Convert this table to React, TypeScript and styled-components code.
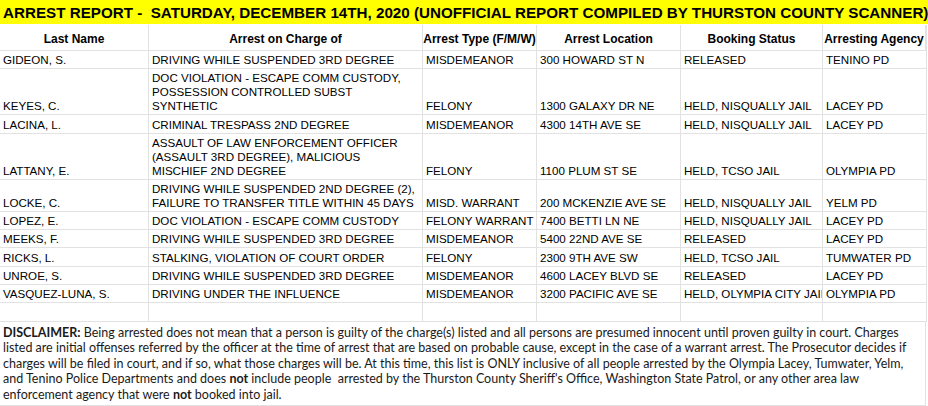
import React from 'react';
import styled, { createGlobalStyle } from 'styled-components';

const GlobalStyle = createGlobalStyle`
  html, body {
    margin: 0;
    padding: 0;
    background: #ffffff;
  }
`;

interface Arrest {
  name: string;
  charge: string[];
  type: string;
  location: string;
  status: string;
  agency: string;
}

const arrests: Arrest[] = [
  { name: 'GIDEON, S.', charge: ['DRIVING WHILE SUSPENDED 3RD DEGREE'], type: 'MISDEMEANOR', location: '300 HOWARD ST N', status: 'RELEASED', agency: 'TENINO PD' },
  { name: 'KEYES, C.', charge: ['DOC VIOLATION - ESCAPE COMM CUSTODY,', 'POSSESSION CONTROLLED SUBST', 'SYNTHETIC'], type: 'FELONY', location: '1300 GALAXY DR NE', status: 'HELD, NISQUALLY JAIL', agency: 'LACEY PD' },
  { name: 'LACINA, L.', charge: ['CRIMINAL TRESPASS 2ND DEGREE'], type: 'MISDEMEANOR', location: '4300 14TH AVE SE', status: 'HELD, NISQUALLY JAIL', agency: 'LACEY PD' },
  { name: 'LATTANY, E.', charge: ['ASSAULT OF LAW ENFORCEMENT OFFICER', '(ASSAULT 3RD DEGREE), MALICIOUS', 'MISCHIEF 2ND DEGREE'], type: 'FELONY', location: '1100 PLUM ST SE', status: 'HELD, TCSO JAIL', agency: 'OLYMPIA PD' },
  { name: 'LOCKE, C.', charge: ['DRIVING WHILE SUSPENDED 2ND DEGREE (2),', 'FAILURE TO TRANSFER TITLE WITHIN 45 DAYS'], type: 'MISD. WARRANT', location: '200 MCKENZIE AVE SE', status: 'HELD, NISQUALLY JAIL', agency: 'YELM PD' },
  { name: 'LOPEZ, E.', charge: ['DOC VIOLATION - ESCAPE COMM CUSTODY'], type: 'FELONY WARRANT', location: '7400 BETTI LN NE', status: 'HELD, NISQUALLY JAIL', agency: 'LACEY PD' },
  { name: 'MEEKS, F.', charge: ['DRIVING WHILE SUSPENDED 3RD DEGREE'], type: 'MISDEMEANOR', location: '5400 22ND AVE SE', status: 'RELEASED', agency: 'LACEY PD' },
  { name: 'RICKS, L.', charge: ['STALKING, VIOLATION OF COURT ORDER'], type: 'FELONY', location: '2300 9TH AVE SW', status: 'HELD, TCSO JAIL', agency: 'TUMWATER PD' },
  { name: 'UNROE, S.', charge: ['DRIVING WHILE SUSPENDED 3RD DEGREE'], type: 'MISDEMEANOR', location: '4600 LACEY BLVD SE', status: 'RELEASED', agency: 'LACEY PD' },
  { name: 'VASQUEZ-LUNA, S.', charge: ['DRIVING UNDER THE INFLUENCE'], type: 'MISDEMEANOR', location: '3200 PACIFIC AVE SE', status: 'HELD, OLYMPIA CITY JAIL', agency: 'OLYMPIA PD' },
];

const headers = ['Last Name', 'Arrest on Charge of', 'Arrest Type (F/M/W)', 'Arrest Location', 'Booking Status', 'Arresting Agency'];

const Sheet = styled.div`
  width: 928px;
  height: 406px;
  overflow: hidden;
  background: #fff;
  font-family: 'Liberation Sans', Arial, sans-serif;
  color: #000;
`;

const Title = styled.div`
  height: 25px;
  box-sizing: border-box;
  background: #ffff00;
  border-bottom: 1px solid #fff;
  padding: 0 3px;
  font-size: 15.2px;
  font-weight: bold;
  line-height: 25px;
  white-space: nowrap;
  overflow: hidden;
`;

const Grid = styled.div`
  display: grid;
  grid-template-columns: 149px 274px 114px 144px 142px 103px;
  border-right: 1px solid #e2e2e2;
  width: 926px;
`;

const HeadCell = styled.div`
  height: 26px;
  box-sizing: border-box;
  border-right: 1px solid #e2e2e2;
  border-bottom: 1px solid #e2e2e2;
  display: flex;
  align-items: flex-end;
  justify-content: center;
  padding-bottom: 4px;
  font-size: 12px;
  font-weight: bold;
  line-height: 14px;
  white-space: nowrap;
  overflow: hidden;
  &:last-child {
    border-right: none;
  }
`;

const Cell = styled.div<{ $last?: boolean }>`
  min-height: 18.35px;
  box-sizing: border-box;
  border-right: ${p => (p.$last ? 'none' : '1px solid #e2e2e2')};
  border-bottom: 1px solid #e2e2e2;
  display: flex;
  flex-direction: column;
  justify-content: flex-end;
  padding: 2px 3px 1px 3px;
  font-size: 11.6px;
  line-height: 14px;
  white-space: nowrap;
  overflow: hidden;
`;

const Disclaimer = styled.div`
  width: 926px;
  box-sizing: border-box;
  height: 84px;
  border-right: 1px solid #e2e2e2;
  border-bottom: 1px solid #e2e2e2;
  padding: 3px 4px 0 3px;
  font-family: Lato, 'Noto Sans', sans-serif;
  font-size: 12.5px;
  line-height: 15.5px;
  color: #1a1a1a;

  b {
    font-weight: bold;
  }
`;

export default function App() {
  return (
    <>
      <GlobalStyle />
      <Sheet>
        <Title>
          ARREST REPORT - &nbsp;SATURDAY, DECEMBER 14TH, 2020 (UNOFFICIAL REPORT COMPILED BY THURSTON COUNTY SCANNER)
        </Title>
        <Grid>
          {headers.map(h => (
            <HeadCell key={h}>{h}</HeadCell>
          ))}
          {arrests.map(a => (
            <React.Fragment key={a.name}>
              <Cell>{a.name}</Cell>
              <Cell>
                {a.charge.map(line => (
                  <span key={line}>{line}</span>
                ))}
              </Cell>
              <Cell>{a.type}</Cell>
              <Cell>{a.location}</Cell>
              <Cell>{a.status}</Cell>
              <Cell $last>{a.agency}</Cell>
            </React.Fragment>
          ))}
          {[0, 1, 2, 3, 4, 5].map(i => (
            <Cell key={`empty-${i}`} $last={i === 5} />
          ))}
        </Grid>
        <Disclaimer>
          <b>DISCLAIMER:</b> Being arrested does not mean that a person is guilty of the charge(s) listed and all persons are presumed innocent until proven guilty in court. Charges listed are initial offenses referred by the officer at the time of arrest that are based on probable cause, except in the case of a warrant arrest. The Prosecutor decides if charges will be filed in court, and if so, what those charges will be. At this time, this list is ONLY inclusive of all people arrested by the Olympia Lacey, Tumwater, Yelm, and Tenino Police Departments and does <b>not</b> include people&nbsp; arrested by the Thurston County Sheriff's Office, Washington State Patrol, or any other area law enforcement agency that were <b>not</b> booked into jail.
        </Disclaimer>
      </Sheet>
    </>
  );
}
